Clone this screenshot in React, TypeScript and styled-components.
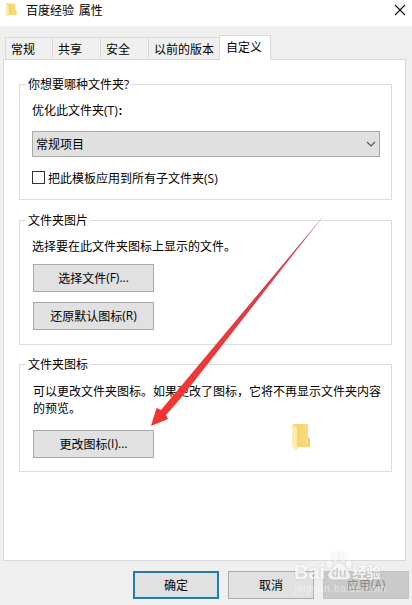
import React from "react";
import styled, { createGlobalStyle } from "styled-components";

const GlobalStyle = createGlobalStyle`
  * { box-sizing: border-box; }
  body {
    margin: 0;
    background: #efefef;
    color: #000;
    font: 12px/16px "Noto Sans CJK SC", sans-serif;
  }
`;

const Dialog = styled.main`
  position: relative;
  width: 412px;
  height: 605px;
  overflow: hidden;
  background: #efefef;
`;

const TitleBar = styled.header`
  display: flex;
  height: 26px;
  padding: 3px 6px 0 5px;
  background: #fff;
`;

const Title = styled.h1`
  flex: 1;
  margin: -1px 0 0 9px;
  height: 16px;
  font: inherit;
  white-space: pre;
  word-spacing: 2px;
`;

const CloseIcon = styled.svg`
  width: 12px;
  height: 12px;
  margin-top: 1px;
`;

const TabStrip = styled.nav`
  display: flex;
  align-items: flex-end;
  height: 33px;
  padding-left: 5px;
`;

const Tab = styled.div<{ $width: number; $active?: boolean }>`
  position: relative;
  width: ${(p) => p.$width}px;
  height: ${(p) => (p.$active ? 25 : 22)}px;
  margin-bottom: ${(p) => (p.$active ? -1 : 0)}px;
  padding: ${(p) => (p.$active ? "3px 0 0 6px" : "3px 0 0 5px")};
  border: 1px solid #d9d9d9;
  border-right-width: ${(p) => (p.$active ? 1 : 0)}px;
  border-bottom: 0;
  background: ${(p) => (p.$active ? "#fff" : "#f0f0f0")};
  white-space: nowrap;
  z-index: ${(p) => (p.$active ? 1 : 0)};
`;

const Page = styled.section`
  width: 403px;
  height: 502px;
  margin-left: 3px;
  padding: 24px 13px 0 15px;
  border: 1px solid #d9d9d9;
  background: #fff;
`;

const Group = styled.section<{ $height: number; $gap: number }>`
  height: ${(p) => p.$height}px;
  margin-bottom: ${(p) => p.$gap}px;
  padding: 0 11px 0 12px;
  border: 1px solid #dcdcdc;
`;

const Legend = styled.h2`
  width: fit-content;
  height: 16px;
  margin: -9px 0 0 -6px;
  padding: 0 2px;
  background: #fff;
  font: inherit;
`;

const Line = styled.p<{ $top: number }>`
  margin: ${(p) => p.$top}px 0 0 0;
  height: 16px;
  white-space: nowrap;
`;

const Paragraph = styled.p`
  margin: 10px -4px 1px 1px;
  height: 34px;
  line-height: 17px;
  white-space: nowrap;
`;

const Latin = styled.span`
  font-family: "Open Sans", sans-serif;
`;

const Colon = styled.b`
  margin-left: 1px;
`;

const Select = styled.div`
  display: flex;
  align-items: center;
  justify-content: space-between;
  height: 26px;
  margin-top: 13px;
  padding: 0 3px;
  border: 1px solid #a8a8a8;
  background: #e0e0e0;
`;

const Chevron = styled.svg`
  width: 10px;
  height: 6px;
`;

const CheckRow = styled.label`
  display: flex;
  align-items: center;
  gap: 3px;
  height: 16px;
  margin-top: 12px;
`;

const CheckBox = styled.span`
  width: 13px;
  height: 13px;
  border: 1px solid #333;
  background: #fff;
`;

const CheckText = styled.span`
  margin-top: 2px;
`;

const Button = styled.button<{ $top?: number; $width?: number; $kind?: "default" | "disabled" }>`
  display: flex;
  align-items: center;
  justify-content: center;
  width: ${(p) => p.$width ?? 121}px;
  height: 28px;
  margin: ${(p) => p.$top ?? 0}px 0 0 0;
  padding: 0 0 1px;
  border: ${(p) =>
    p.$kind === "default" ? "2px solid #2b789f" : p.$kind === "disabled" ? "1px solid #c3c3c3" : "1px solid #a9a9a9"};
  background: ${(p) => (p.$kind === "disabled" ? "#cacaca" : "#e1e1e1")};
  box-shadow: ${(p) => (p.$kind === "default" ? "inset 0 0 0 1px #c9e9f7" : "none")};
  color: ${(p) => (p.$kind === "disabled" ? "#858585" : "#000")};
  font: inherit;
  white-space: nowrap;
`;

const GroupButton = styled(Button)`
  margin-left: 1px;
`;

const PreviewRow = styled.div`
  display: flex;
  align-items: flex-start;
`;

const Preview = styled.div`
  margin: 6px 0 0 137px;
`;

const Footer = styled.footer`
  display: flex;
  gap: 9px;
  padding: 10px 0 0 133px;
`;

const Arrow = styled.svg`
  position: absolute;
  left: 145px;
  top: 210px;
  width: 185px;
  height: 222px;
  pointer-events: none;
`;

const Watermark = styled.div`
  position: absolute;
  left: 294px;
  top: 549px;
  width: 110px;
  height: 48px;
  color: rgba(255, 255, 255, 0.8);
  pointer-events: none;
`;

const Brand = styled.div`
  display: flex;
  align-items: center;
  height: 22px;
  margin-top: 12px;
  font: bold 20px/22px "Liberation Sans", sans-serif;
  filter: drop-shadow(0 0 1px rgba(150, 150, 150, 0.4));
`;

const Paw = styled.svg`
  width: 27px;
  height: 30px;
  margin: -12px 0 0 0;
`;

const BrandSuffix = styled.span`
  font: bold 14.5px/20px "Noto Sans CJK SC", sans-serif;
`;

const Address = styled.div`
  font: 10px/12px "Liberation Sans", sans-serif;
  letter-spacing: 0.7px;
  white-space: nowrap;
  opacity: 0.6;
`;

const FolderSvg = styled.svg<{ $w: number; $h: number }>`
  display: block;
  width: ${(p) => p.$w}px;
  height: ${(p) => p.$h}px;
`;

function Folder({ width, height }: { width: number; height: number }) {
  const id = `folder-${width}`;
  return (
    <FolderSvg $w={width} $h={height} viewBox="0 0 20 28" preserveAspectRatio="none">
      <defs>
        <linearGradient id={id} x1="0" y1="0" x2="1" y2="0">
          <stop offset="0" stopColor="#f3d36c" />
          <stop offset="1" stopColor="#fbdb7c" />
        </linearGradient>
      </defs>
      <path d="M2 1H17V14L19 16V24H2Z" fill={`url(#${id})`} />
      <path d="M17 14L19 15.5V24H17Z" fill="#f0d070" />
      <path d="M1 1L6.5 5V24L5 27L1 23Z" fill="#ffecac" />
      <path d="M6.5 5V24L5 27" fill="none" stroke="#efcf78" strokeWidth=".7" />
    </FolderSvg>
  );
}

const tabs = [
  { label: "常规", width: 47 },
  { label: "共享", width: 48 },
  { label: "安全", width: 48 },
  { label: "以前的版本", width: 71 },
  { label: "自定义", width: 52 },
];

export default function App() {
  return (
    <>
      <GlobalStyle />
      <Dialog>
        <TitleBar>
          <Folder width={12} height={14} />
          <Title>百度经验 属性</Title>
          <CloseIcon viewBox="0 0 12 12">
            <path d="M1 1L11 11M11 1L1 11" stroke="#111" strokeWidth="1.1" />
          </CloseIcon>
        </TitleBar>
        <TabStrip>
          {tabs.map((tab, i) => (
            <Tab key={tab.label} $width={tab.width} $active={i === 4}>{tab.label}</Tab>
          ))}
        </TabStrip>
        <Page>
          <Group $height={116} $gap={20}>
            <Legend>你想要哪种文件夹<Latin>?</Latin></Legend>
            <Line $top={10}>优化此文件夹<Latin>(T)<Colon>:</Colon></Latin></Line>
            <Select>
              常规项目
              <Chevron viewBox="0 0 10 6">
                <path d="M1 1L5 5L9 1" fill="none" stroke="#555" strokeWidth="1.2" />
              </Chevron>
            </Select>
            <CheckRow>
              <CheckBox />
              <CheckText>把此模板应用到所有子文件夹<Latin>(S)</Latin></CheckText>
            </CheckRow>
          </Group>
          <Group $height={125} $gap={19}>
            <Legend>文件夹图片</Legend>
            <Line $top={10}>选择要在此文件夹图标上显示的文件。</Line>
            <GroupButton $top={10}>选择文件<Latin>(F)...</Latin></GroupButton>
            <GroupButton $top={10}>还原默认图标<Latin>(R)</Latin></GroupButton>
          </Group>
          <Group $height={108} $gap={0}>
            <Legend>文件夹图标</Legend>
            <Paragraph>
              可以更改文件夹图标。如果更改了图标，它将不再显示文件夹内容<br />的预览。
            </Paragraph>
            <PreviewRow>
              <GroupButton $top={13}>更改图标<Latin>(I)...</Latin></GroupButton>
              <Preview><Folder width={20} height={28} /></Preview>
            </PreviewRow>
          </Group>
        </Page>
        <Footer>
          <Button $width={86} $kind="default">确定</Button>
          <Button $width={86}>取消</Button>
          <Button $width={86} $kind="disabled">应用<Latin>(A)</Latin></Button>
        </Footer>
        <Arrow viewBox="145 210 185 222">
          <defs>
            <linearGradient id="arrow-red" gradientUnits="userSpaceOnUse" x1="325" y1="214" x2="155" y2="423">
              <stop offset="0" stopColor="#c86a78" />
              <stop offset=".35" stopColor="#d6404a" />
              <stop offset=".6" stopColor="#e83c3e" />
              <stop offset="1" stopColor="#f5322f" />
            </linearGradient>
          </defs>
          <path d="M325 214L183 395.5L166 415L168 419L151 426L156.5 408L161 410L215 345.5Z" fill="url(#arrow-red)" />
        </Arrow>
        <Watermark>
          <Brand>
            <span>Bai</span>
            <Paw viewBox="0 0 29 32">
              <g fill="currentColor">
                <ellipse cx="4.5" cy="14" rx="3" ry="4" />
                <ellipse cx="11" cy="6" rx="3.3" ry="4.7" />
                <ellipse cx="19.5" cy="6" rx="3.3" ry="4.7" />
                <ellipse cx="25.5" cy="14" rx="3" ry="4" />
                <path d="M15.5 13C11 13 10 18 6 21C1 25 4 31 10 30.5H21C28 31 29 25 24 21C21 18 20 13 15.5 13Z" />
              </g>
              <text x="7" y="28" fill="#cdcdcd" fontFamily="Liberation Sans" fontWeight="bold" fontSize="13">du</text>
            </Paw>
            <BrandSuffix>经验</BrandSuffix>
          </Brand>
          <Address>jingyan.baidu.com</Address>
        </Watermark>
      </Dialog>
    </>
  );
}
